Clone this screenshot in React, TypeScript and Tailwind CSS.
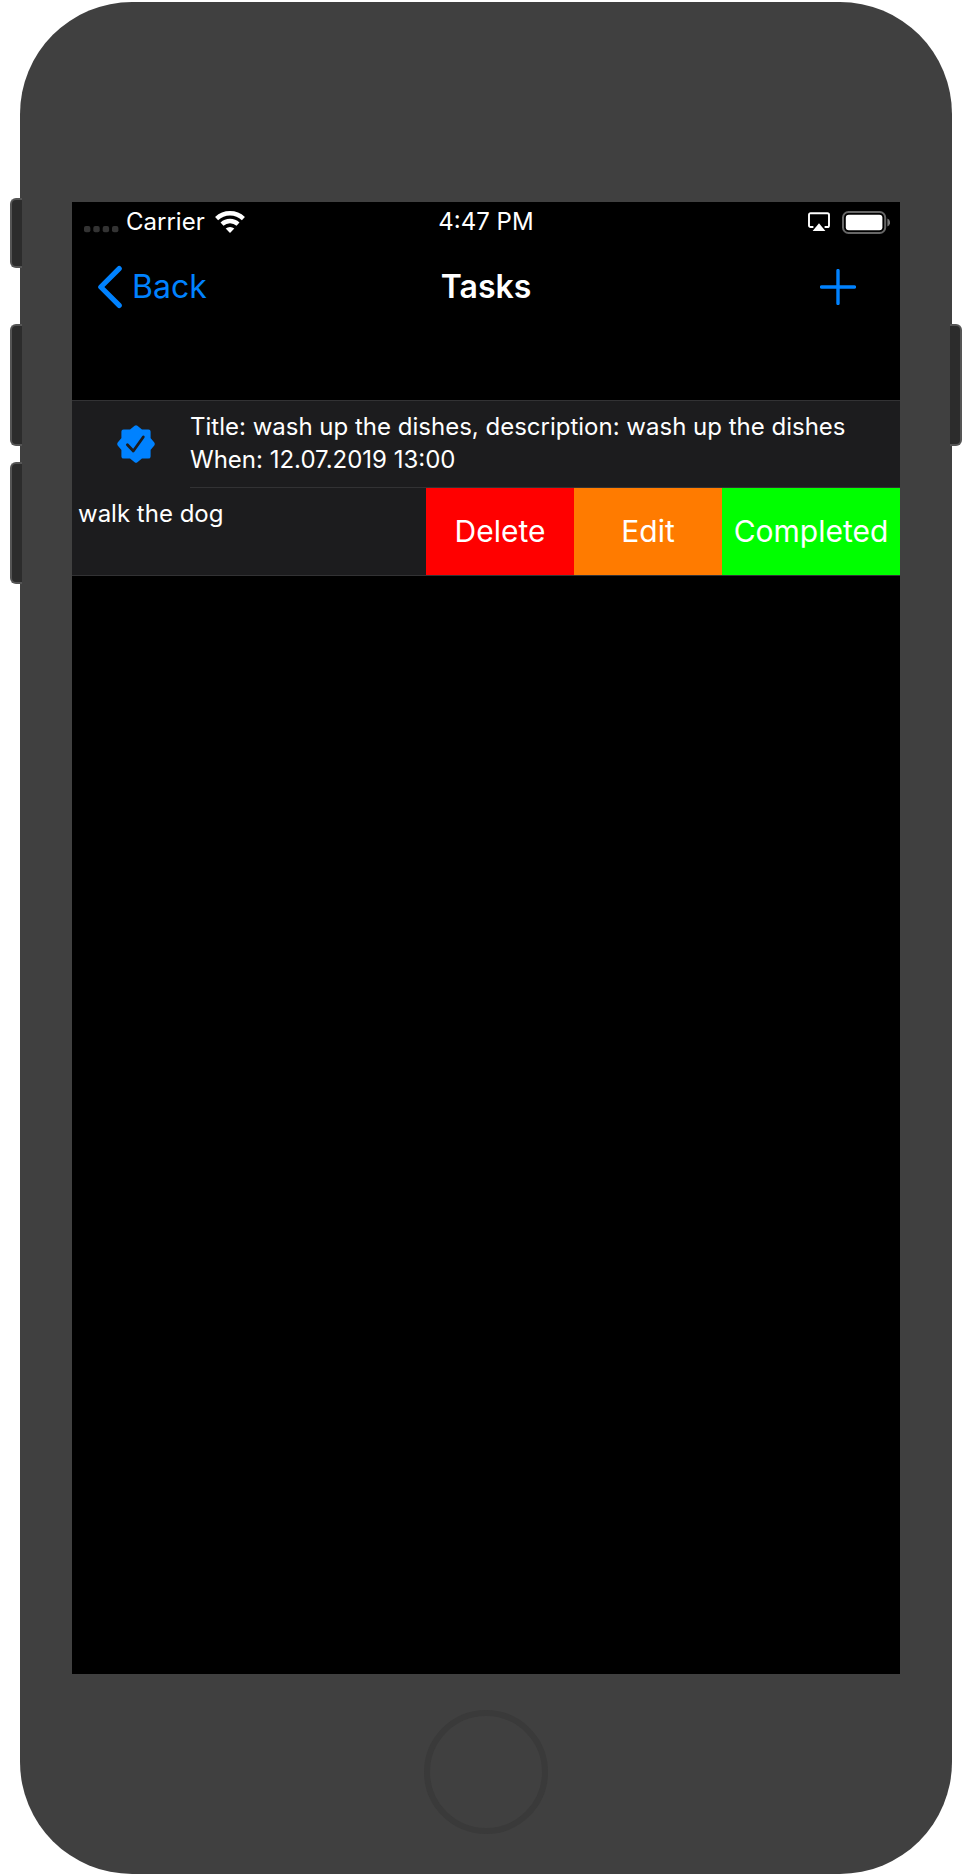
import React from "react";

function SignalDots() {
  return (
    <svg viewBox="0 0 36 8" className="mt-3.5 h-2 w-9" fill="#333333" aria-hidden="true">
      <rect x="0" y="1" width="6.4" height="6.2" rx="2" />
      <rect x="9.3" y="1" width="6.4" height="6.2" rx="2" />
      <rect x="18.7" y="1" width="6.4" height="6.2" rx="2" />
      <rect x="28" y="1" width="6.4" height="6.2" rx="2" />
    </svg>
  );
}

function WifiIcon() {
  return (
    <svg viewBox="0 0 30 22" className="h-[22px] w-[30px]" aria-hidden="true">
      <g fill="none" stroke="#fff" strokeWidth="4.4">
        <path d="M1.6 7.6A19.4 19.4 0 0 1 28.4 7.6" />
        <path d="M7 13.2A11.8 11.8 0 0 1 23 13.2" />
      </g>
      <path d="M15 22L10.7 17.6A6.4 6.4 0 0 1 19.3 17.6Z" fill="#fff" />
    </svg>
  );
}

function AirPlayIcon() {
  return (
    <svg viewBox="0 0 22 20" className="h-5 w-[22px]" aria-hidden="true">
      <path
        d="M5.4 15H2.6A1.6 1.6 0 0 1 1 13.4V2.8A1.6 1.6 0 0 1 2.6 1.2H19.4A1.6 1.6 0 0 1 21 2.8V13.4A1.6 1.6 0 0 1 19.4 15H16.6"
        fill="none"
        stroke="#fff"
        strokeWidth="1.9"
      />
      <path d="M11 11.2L17.4 19H4.6Z" fill="#fff" />
    </svg>
  );
}

function BatteryIcon() {
  return (
    <svg viewBox="0 0 48 23" className="h-[23px] w-12" aria-hidden="true">
      <rect x="1" y="1" width="42.2" height="21" rx="5.5" fill="none" stroke="#666" strokeWidth="2" />
      <rect x="3.8" y="3.8" width="36.6" height="15.4" rx="3" fill="#fff" />
      <path d="M45.4 7.6A4.2 4.2 0 0 1 45.4 15.4Z" fill="#777" />
    </svg>
  );
}

function ChevronIcon() {
  return (
    <svg viewBox="0 0 26 44" className="h-11 w-[26px]" aria-hidden="true">
      <path
        d="M23.2 3.6L4.8 22L23.2 40.4"
        fill="none"
        stroke="#0082ff"
        strokeWidth="5.2"
        strokeLinecap="round"
        strokeLinejoin="round"
      />
    </svg>
  );
}

function PlusIcon() {
  return (
    <svg viewBox="0 0 36 36" className="h-9 w-9" aria-hidden="true">
      <path d="M18 1.6V34.4M1.6 18H34.4" stroke="#0082ff" strokeWidth="3.4" strokeLinecap="round" />
    </svg>
  );
}

function SealCheckIcon() {
  return (
    <svg viewBox="0 0 40 40" className="h-10 w-10" role="img" aria-label="Completed">
      <path
        d="M20 3.4L25.2 7.6H32.4V14.8L36.6 20L32.4 25.2V32.4H25.2L20 36.6L14.8 32.4H7.6V25.2L3.4 20L7.6 14.8V7.6H14.8Z"
        fill="#0082ff"
        stroke="#0082ff"
        strokeWidth="4.4"
        strokeLinejoin="round"
      />
      <path
        d="M11.4 20.8L17.3 27L27.3 13"
        fill="none"
        stroke="#1c1c1e"
        strokeWidth="2.8"
        strokeLinecap="round"
        strokeLinejoin="round"
      />
    </svg>
  );
}

const sideButton = "w-3 border-2 border-[#555555] bg-[#2c2c2c]";
const leftButton = sideButton + " rounded-l-md border-r-0";
const rightButton = sideButton + " rounded-r-md border-l-0";
const action = "flex items-center justify-center text-[30px] text-white";

export default function App() {
  return (
    <div className="flex min-h-screen bg-white px-2.5 py-0.5 font-['Inter',sans-serif]">
      <div className="z-10 -mr-0.5 flex flex-col pt-[196px]" aria-hidden="true">
        <div className={leftButton + " h-[70px]"} />
        <div className={leftButton + " mt-14 h-[122px]"} />
        <div className={leftButton + " mt-4 h-[122px]"} />
      </div>

      <div className="flex min-w-0 flex-1 flex-col rounded-[112px] bg-[#404040] px-[52px] pt-[200px]">
        <main className="flex flex-1 flex-col overflow-hidden bg-black text-white">
          <div className="grid h-10 grid-cols-[1fr_auto_1fr] items-center px-3 text-2xl">
            <div className="flex items-center">
              <SignalDots />
              <span className="mr-2.5 ml-1.5">Carrier</span>
              <WifiIcon />
            </div>
            <time>4:47 PM</time>
            <div className="-mr-0.5 flex items-center justify-end gap-3">
              <AirPlayIcon />
              <BatteryIcon />
            </div>
          </div>

          <header className="grid h-[90px] grid-cols-[1fr_auto_1fr] items-center px-6">
            <button type="button" className="flex items-center gap-2.5 text-[32px] text-[#0082ff]">
              <ChevronIcon />
              Back
            </button>
            <h1 className="text-[32px] font-semibold">Tasks</h1>
            <button type="button" aria-label="Add task" className="justify-self-end pr-5">
              <PlusIcon />
            </button>
          </header>

          <ul className="mt-[68px] border-y border-[#323234] bg-[#1c1c1e] text-2xl leading-[33px]">
            <li className="flex h-[87px]">
              <div className="flex w-[118px] items-center pb-0.5 pl-11">
                <SealCheckIcon />
              </div>
              <div className="min-w-0 flex-1 border-b border-[#323234] pt-[9px] whitespace-nowrap">
                <p>Title: wash up the dishes, description: wash up the dishes</p>
                <p>When: 12.07.2019 13:00</p>
              </div>
            </li>
            <li className="flex h-[87px]">
              <p className="flex-1 pt-[9px] pl-1.5">walk the dog</p>
              <button type="button" className={action + " w-[148px] bg-[#ff0000]"}>
                Delete
              </button>
              <button type="button" className={action + " w-[148px] bg-[#ff7b00]"}>
                Edit
              </button>
              <button type="button" className={action + " w-[178px] bg-[#00ff00]"}>
                Completed
              </button>
            </li>
          </ul>
        </main>

        <div className="flex h-[200px] justify-center pt-9">
          <button
            type="button"
            aria-label="Home"
            className="h-[124px] w-[124px] rounded-full border-6 border-[#3a3a3a]"
          />
        </div>
      </div>

      <div className="z-10 -ml-0.5 pt-[322px]" aria-hidden="true">
        <div className={rightButton + " h-[122px]"} />
      </div>
    </div>
  );
}
